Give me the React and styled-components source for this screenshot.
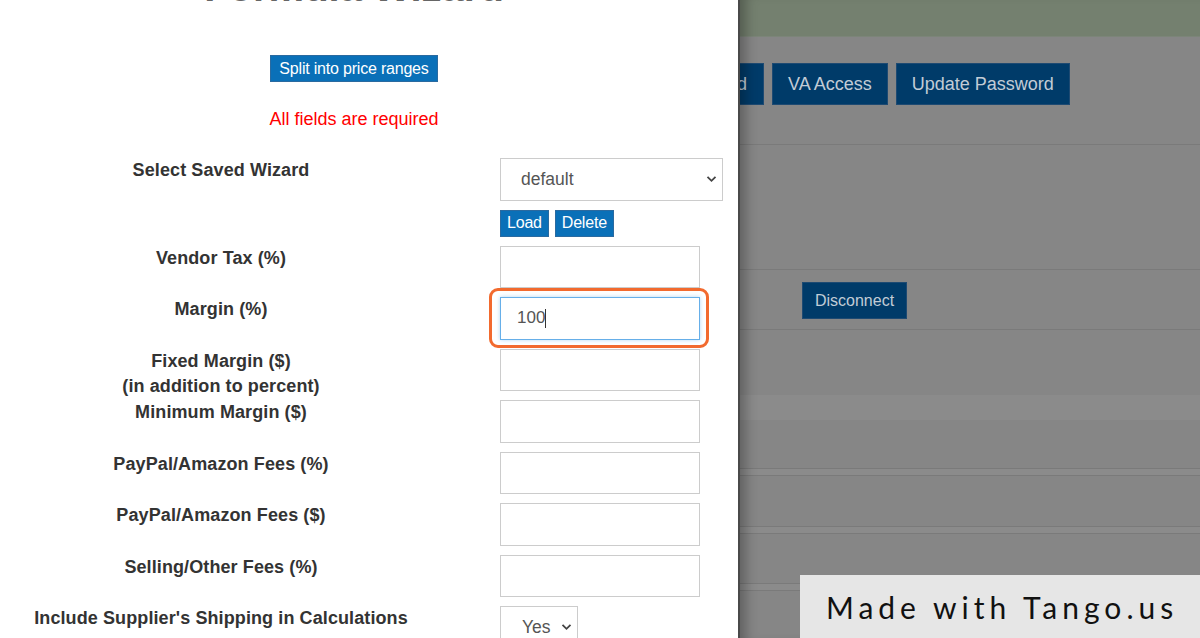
import React from "react";
import styled, { createGlobalStyle } from "styled-components";

const GlobalStyle = createGlobalStyle`
	html, body {
		margin: 0;
		padding: 0;
		overflow: hidden;
		background: #ffffff;
	}
	* {
		box-sizing: border-box;
	}
`;

const Page = styled.div`
	position: relative;
	display: flex;
	width: 1200px;
	height: 638px;
	overflow: hidden;
	font-family: "Liberation Sans", Arial, sans-serif;
`;

// ---- wizard panel ----

const Modal = styled.div`
	flex: 0 0 740px;
	background: #ffffff;
	border-right: 2px solid #4a4a4a;
	overflow: hidden;
`;

const Header = styled.div`
	width: 708px;
	display: flex;
	flex-direction: column;
	align-items: center;
`;

const Title = styled.h1`
	margin: -35px 0 0;
	font-size: 40px;
	line-height: 44px;
	font-weight: bold;
	color: #666;
`;

const Button = styled.button`
	font-family: "Liberation Sans", Arial, sans-serif;
	font-size: ${(props) => props.size || 16}px;
	height: ${(props) => props.h || 27}px;
	padding: 0 ${(props) => props.pad || 8}px;
	color: #ffffff;
	background: #0a70b8;
	border: 1px solid #2a6aa0;
	border-radius: 0;
	letter-spacing: -0.2px;
	cursor: pointer;
`;

const SplitButton = styled(Button)`
	margin-top: 46px;
	width: 168px;
	padding: 0;
`;

const Required = styled.div`
	margin-top: 26px;
	font-size: 18px;
	line-height: 22px;
	color: #ff0000;
`;

const Form = styled.div`
	margin-top: 28px;
	display: grid;
	grid-template-columns: 442px 240px;
	grid-auto-rows: auto;
	column-gap: 58px;
	row-gap: 9px;
	align-items: start;
`;

const Label = styled.div`
	height: 42.5px;
	font-size: 18px;
	line-height: 25px;
	font-weight: bold;
	color: #333;
	text-align: center;
	letter-spacing: 0.1px;
	white-space: nowrap;
`;

const SelectWrap = styled.div`
	position: relative;
	width: ${(props) => props.w}px;
`;

const Select = styled.select`
	appearance: none;
	width: 100%;
	height: 42.5px;
	padding: 0 0 0 ${(props) => props.indent || 20}px;
	font-family: "Liberation Sans", Arial, sans-serif;
	font-size: 17.5px;
	color: #555;
	background: #ffffff;
	border: 1px solid #cccccc;
	border-radius: 0;
	outline: none;
`;

const Chevron = styled.svg`
	position: absolute;
	right: ${(props) => props.r}px;
	top: 17px;
	pointer-events: none;
`;

const ButtonPair = styled.div`
	display: flex;
	gap: 6px;
`;

const FieldWrap = styled.div`
	position: relative;
	width: 200px;
`;

const Input = styled.input`
	display: block;
	width: 200px;
	height: 42.5px;
	padding: 0 16px;
	font-family: "Liberation Sans", Arial, sans-serif;
	font-size: 17px;
	color: #555;
	background: #ffffff;
	border: 1px solid ${(props) => (props.focused ? "#66afe9" : "#cccccc")};
	box-shadow: ${(props) =>
		props.focused ? "0 0 4px rgba(102, 175, 233, 0.5)" : "none"};
	border-radius: 0;
	outline: none;
`;

const Caret = styled.span`
	position: absolute;
	left: 45px;
	top: 12px;
	width: 1px;
	height: 19px;
	background: #333;
`;

const Highlight = styled.div`
	position: absolute;
	top: -9px;
	bottom: -8px;
	left: -11px;
	right: -9px;
	border: 3px solid #f26a2e;
	border-radius: 9px;
	box-shadow: inset 0 0 2px rgba(255, 255, 255, 0.8);
	pointer-events: none;
`;

// ---- page behind overlay ----

const Backdrop = styled.div`
	position: relative;
	flex: 1;
	background: #868686;
	overflow: hidden;
	&::after {
		content: "";
		position: absolute;
		inset: 0;
		box-shadow: inset 14px 0 12px -8px rgba(0, 0, 0, 0.28);
		pointer-events: none;
	}
`;

const TopBar = styled.div`
	height: 37px;
	background: #74806f;
	border-bottom: 1px solid #7c8579;
`;

const NavRow = styled.div`
	display: flex;
	gap: 8px;
	margin-top: 26px;
	height: 42px;
`;

const Clip = styled.div`
	width: 24px;
	display: flex;
	justify-content: flex-end;
	overflow: hidden;
`;

const DarkButton = styled.div`
	flex-shrink: 0;
	display: flex;
	align-items: center;
	justify-content: center;
	height: ${(props) => props.h}px;
	padding: 0 ${(props) => props.pad}px;
	font-size: ${(props) => props.size}px;
	color: #c2ccd6;
	background: #003b69;
	border: 1px solid #1e4a72;
	white-space: nowrap;
`;

const Panel = styled.div`
	border-top: ${(props) => (props.top ? "1px solid #7a7a7a" : "none")};
	border-bottom: 1px solid #7a7a7a;
	height: ${(props) => props.h}px;
	padding: ${(props) => props.pad || "0"};
`;

const Gap = styled.div`
	height: 6px;
	background: #8b8b8b;
`;

const Band = styled.div`
	height: 25px;
	margin-top: 65px;
	background: #8b8b8b;
`;

const Watermark = styled.div`
	position: absolute;
	right: 0;
	bottom: 0;
	width: 400px;
	height: 63px;
	display: flex;
	align-items: center;
	padding-left: 26px;
	background: #e6e6e6;
	font-family: "Lato", "Noto Sans", sans-serif;
	font-size: 30px;
	letter-spacing: 5px;
	color: #111;
	white-space: nowrap;
`;

const ChevronIcon = ({ r }) => (
	<Chevron r={r} width="11" height="8" viewBox="0 0 11 8">
		<path d="M1.5 1.8 L5.5 5.8 L9.5 1.8" fill="none" stroke="#444" strokeWidth="1.8" />
	</Chevron>
);

const fields = [
	{ label: "Vendor Tax (%)" },
	{ label: "Margin (%)", value: "100", focused: true },
	{ label: ["Fixed Margin ($)", "(in addition to percent)"] },
	{ label: "Minimum Margin ($)" },
	{ label: "PayPal/Amazon Fees (%)" },
	{ label: "PayPal/Amazon Fees ($)" },
	{ label: "Selling/Other Fees (%)" },
];

const App = () => {
	return (
		<>
			<GlobalStyle />
			<Page>
				<Modal>
					<Header>
						<Title>Formula Wizard</Title>
						<SplitButton>Split into price ranges</SplitButton>
						<Required>All fields are required</Required>
					</Header>
					<Form>
						<Label>Select Saved Wizard</Label>
						<SelectWrap w={223}>
							<Select defaultValue="default">
								<option value="default">default</option>
							</Select>
							<ChevronIcon r={6} />
						</SelectWrap>

						<div />
						<ButtonPair>
							<Button pad={6}>Load</Button>
							<Button pad={6}>Delete</Button>
						</ButtonPair>

						{fields.map((f, i) => (
							<React.Fragment key={i}>
								<Label>
									{Array.isArray(f.label)
										? f.label.map((l) => <div key={l}>{l}</div>)
										: f.label}
								</Label>
								<FieldWrap>
									<Input
										focused={f.focused}
										defaultValue={f.value || ""}
										readOnly
									/>
									{f.focused && <Caret />}
									{f.focused && <Highlight />}
								</FieldWrap>
							</React.Fragment>
						))}

						<Label>Include Supplier's Shipping in Calculations</Label>
						<SelectWrap w={78}>
							<Select defaultValue="yes" indent={21}>
								<option value="yes">Yes</option>
							</Select>
							<ChevronIcon r={6} />
						</SelectWrap>
					</Form>
				</Modal>

				<Backdrop>
					<TopBar />
					<NavRow>
						<Clip>
							<DarkButton h={42} pad={16} size={18}>Add Card</DarkButton>
						</Clip>
						<DarkButton h={42} pad={15} size={18}>VA Access</DarkButton>
						<DarkButton h={42} pad={15} size={18}>Update Password</DarkButton>
					</NavRow>
					<Panel h={40} />
					<Panel h={125} />
					<Panel h={60} pad="12px 0 0 62px">
						<DarkButton h={37} pad={0} size={16} style={{ width: 105 }}>
							Disconnect
						</DarkButton>
					</Panel>
					<Band />
					<Panel h={49} />
					<Gap />
					<Panel top h={52} />
					<Gap />
					<Panel top h={51} />
					<Gap />
					<Panel top h={60} />
				</Backdrop>

				<Watermark>Made with Tango.us</Watermark>
			</Page>
		</>
	);
};

export default App;
